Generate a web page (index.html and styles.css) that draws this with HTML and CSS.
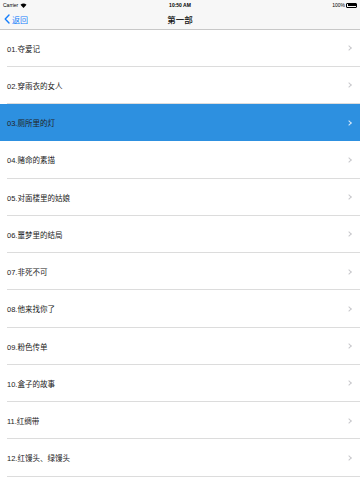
FILE: index.html
```html
<!DOCTYPE html>
<html>
<head>
<meta charset="utf-8">
<link rel="stylesheet" href="styles.css">
</head>
<body>
<div class="header">
  <div class="status">
    <div class="st-left">Carrier
      <svg class="wifi" width="7" height="5" viewBox="0 0 14 10"><path d="M7 10 L1 3.5 A9 9 0 0 1 13 3.5 Z" fill="#000"/></svg>
    </div>
    <div class="st-center">10:50 AM</div>
    <div class="st-right">100% <span class="battery"><span class="batt-fill"></span></span></div>
  </div>
  <div class="nav">
    <div class="back">
      <svg width="6" height="10" viewBox="0 0 6 10"><path d="M5 1 L1.2 5 L5 9" fill="none" stroke="#157efb" stroke-width="1.4" stroke-linecap="round" stroke-linejoin="round"/></svg>
      <span>返回</span>
    </div>
    <div class="title">第一部</div>
  </div>
</div>
<ul class="list">
  <li class="row"><span class="label">01.夺爱记</span><span class="chev"></span></li>
  <li class="row"><span class="label">02.穿雨衣的女人</span><span class="chev"></span></li>
  <li class="row selected"><span class="label">03.厕所里的灯</span><span class="chev"></span></li>
  <li class="row"><span class="label">04.赌命的素描</span><span class="chev"></span></li>
  <li class="row"><span class="label">05.对面楼里的姑娘</span><span class="chev"></span></li>
  <li class="row"><span class="label">06.噩梦里的结局</span><span class="chev"></span></li>
  <li class="row"><span class="label">07.非死不可</span><span class="chev"></span></li>
  <li class="row"><span class="label">08.他来找你了</span><span class="chev"></span></li>
  <li class="row"><span class="label">09.粉色传单</span><span class="chev"></span></li>
  <li class="row"><span class="label">10.盒子的故事</span><span class="chev"></span></li>
  <li class="row"><span class="label">11.红绸带</span><span class="chev"></span></li>
  <li class="row"><span class="label">12.红馒头、绿馒头</span><span class="chev"></span></li>
</ul>
</body>
</html>
```
FILE: styles.css
```css
* { box-sizing: border-box; }
html, body { margin: 0; padding: 0; }
body {
  width: 360px;
  height: 480px;
  overflow: hidden;
  background: #fff;
  font-family: "Helvetica Neue", "Liberation Sans", "Noto Sans CJK SC", sans-serif;
  color: #222;
}
.header {
  height: 29.5px;
  background: #f7f7f7;
  border-bottom: 1px solid #c8c8c8;
}
.status {
  height: 10px;
  display: flex;
  align-items: center;
  justify-content: space-between;
  padding: 0 3px;
  font-size: 5px;
  color: #000;
  position: relative;
}
.st-left { display: flex; align-items: center; gap: 2px; }
.st-center {
  position: absolute;
  left: 0; right: 0;
  text-align: center;
  font-weight: bold;
}
.st-right { display: flex; align-items: center; gap: 1px; }
.battery {
  width: 11px;
  height: 5px;
  border: 0.6px solid #000;
  border-radius: 1px;
  padding: 0.5px;
  display: flex;
}
.batt-fill { flex: 1; background: #000; }
.nav {
  height: 18.5px;
  display: flex;
  align-items: center;
  position: relative;
}
.back {
  display: flex;
  align-items: center;
  gap: 2px;
  padding-left: 4px;
  color: #157efb;
  font-size: 8px;
}
.title {
  position: absolute;
  left: 0; right: 0;
  text-align: center;
  font-size: 8.5px;
  font-weight: 500;
  color: #111;
}
.list {
  list-style: none;
  margin: 0;
  padding: 0;
}
.row {
  height: 37.25px;
  display: flex;
  align-items: center;
  justify-content: space-between;
  padding: 0 9px 0 7px;
  position: relative;
  font-size: 7.5px;
  color: #222;
}
.row::after {
  content: "";
  position: absolute;
  left: 7px;
  right: 0;
  bottom: 0;
  height: 1px;
  background: #dcdcdc;
}
.row.selected { background: #2d90e0; }
.row.selected::after { display: none; }
.chev {
  width: 4px;
  height: 4px;
  border-top: 1px solid #c8c8cc;
  border-right: 1px solid #c8c8cc;
  transform: rotate(45deg);
}
.row.selected .chev { border-color: #d8e9f8; }
```
